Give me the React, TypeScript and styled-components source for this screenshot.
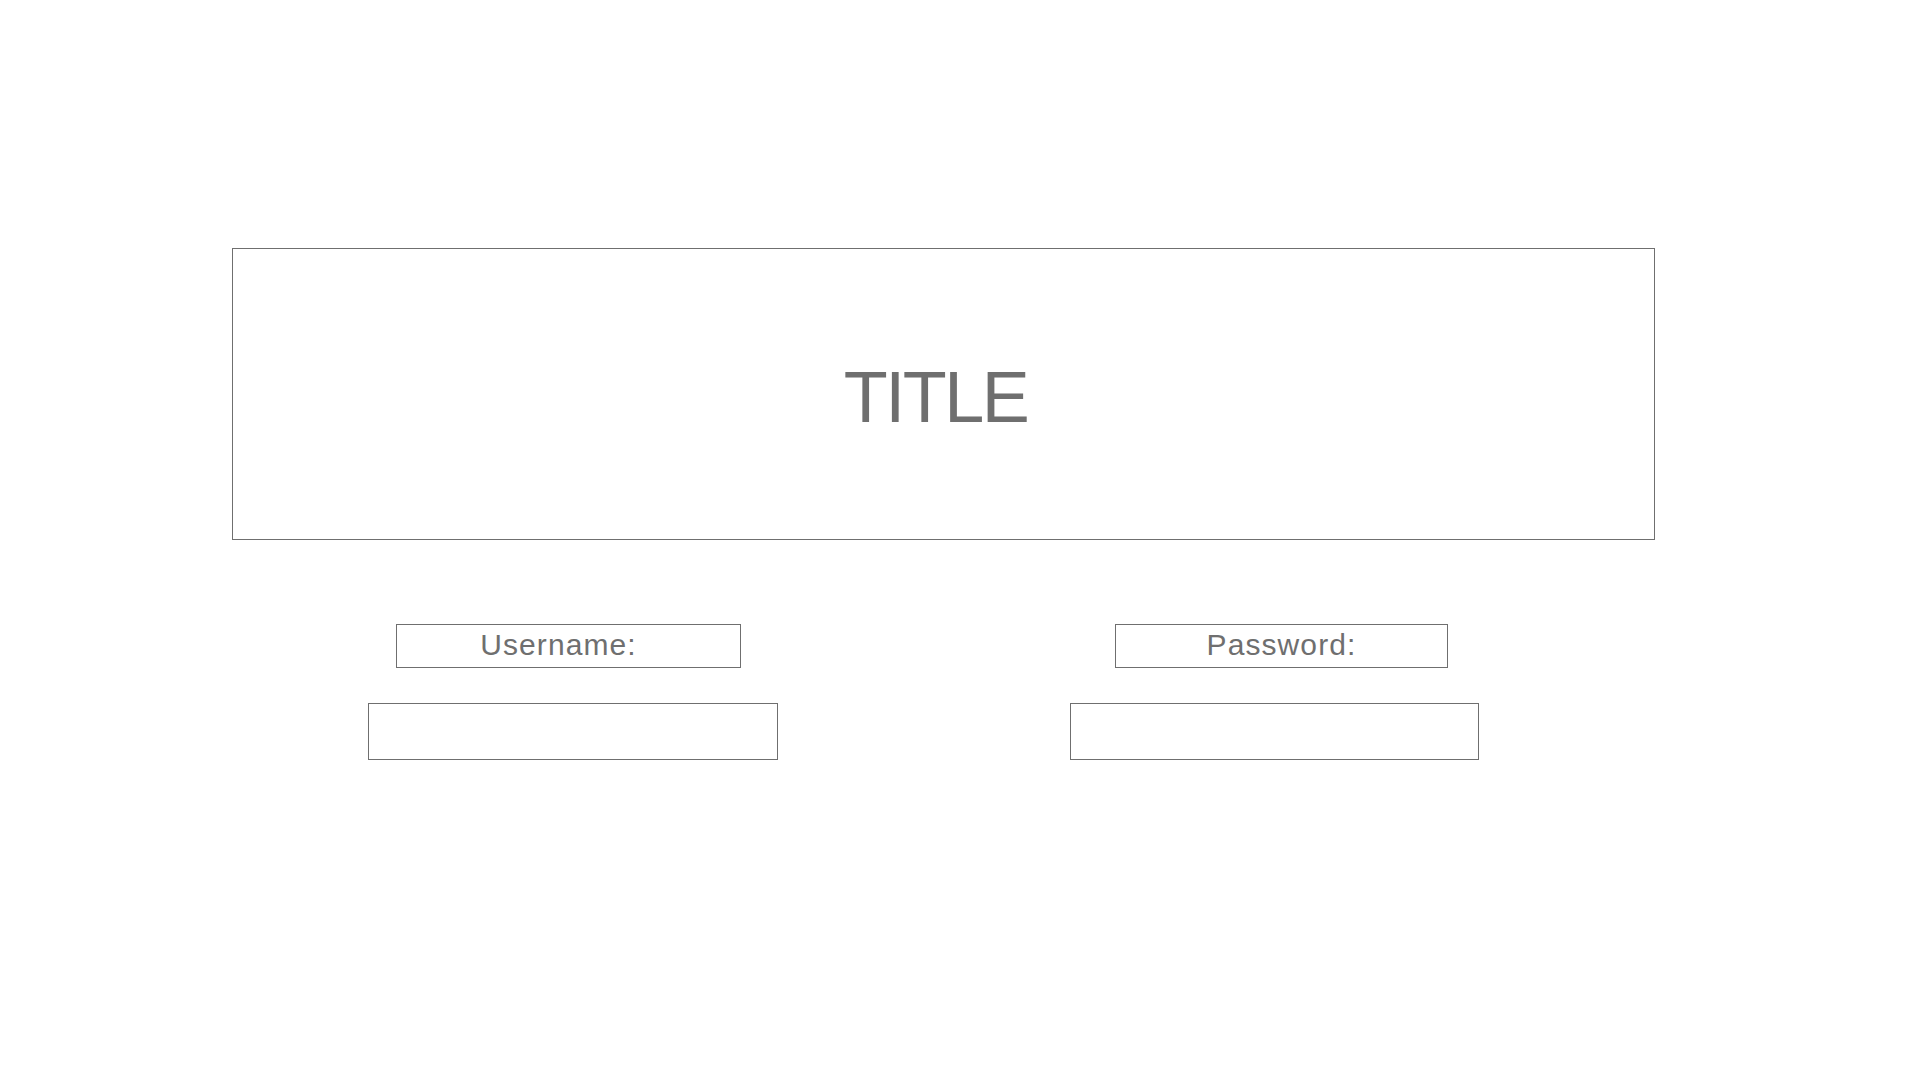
import React from "react";
import styled, { createGlobalStyle } from "styled-components";

const Global = createGlobalStyle`
  html, body { margin: 0; padding: 0; background: #ffffff; }
  body { font-family: "Liberation Sans", Arial, Helvetica, sans-serif; }
`;

const Page = styled.div`
  width: 1920px;
  height: 1080px;
  box-sizing: border-box;
  padding: 248px 0 0 232px;
  display: flex;
  flex-direction: column;
`;

const TitleBox = styled.div`
  width: 1423px;
  height: 292px;
  box-sizing: border-box;
  border: 1px solid #6f6f6f;
  display: flex;
  align-items: center;
  justify-content: center;
`;

const Title = styled.h1`
  margin: 0;
  font-weight: 400;
  font-size: 72px;
  letter-spacing: -2.5px;
  line-height: 1;
  color: #6f6f6f;
  padding-top: 6px;
  padding-right: 16px;
`;

const FieldsRow = styled.div`
  display: flex;
  margin-top: 84px;
  padding-left: 136px;
  gap: 292px;
`;

const Field = styled.div<{ $inputWidth: number }>`
  width: ${(p) => p.$inputWidth}px;
  display: flex;
  flex-direction: column;
  gap: 35px;
`;

const Label = styled.div<{ $offset: number; $width: number; $shift: number }>`
  margin-left: ${(p) => p.$offset}px;
  width: ${(p) => p.$width}px;
  height: 44px;
  box-sizing: border-box;
  border: 1px solid #6f6f6f;
  display: flex;
  align-items: center;
  justify-content: center;
  padding-right: ${(p) => p.$shift}px;
  padding-bottom: 2px;
  font-size: 30px;
  letter-spacing: 1.1px;
  color: #6f6f6f;
  line-height: 1;
`;

const Input = styled.input`
  width: 100%;
  height: 57px;
  box-sizing: border-box;
  border: 1px solid #6f6f6f;
  background: #ffffff;
  outline: none;
  padding: 0 12px;
  font-family: inherit;
  font-size: 24px;
  color: #6f6f6f;
  margin: 0;
`;

export default function App() {
  return (
    <>
      <Global />
      <Page>
        <TitleBox>
          <Title>TITLE</Title>
        </TitleBox>
        <FieldsRow>
          <Field $inputWidth={410}>
            <Label $offset={28} $width={345} $shift={20}>
              Username:
            </Label>
            <Input type="text" aria-label="Username" />
          </Field>
          <Field $inputWidth={409}>
            <Label $offset={45} $width={333} $shift={0}>
              Password:
            </Label>
            <Input type="password" aria-label="Password" />
          </Field>
        </FieldsRow>
      </Page>
    </>
  );
}
